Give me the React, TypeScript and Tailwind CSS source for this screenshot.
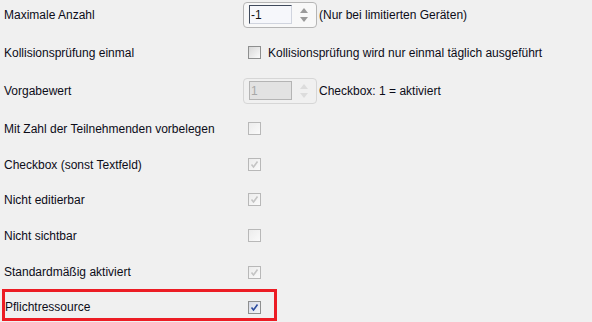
import React from 'react'

type Box = 'off' | 'offDisabled' | 'onDisabled' | 'on'

function CheckBox({ state }: { state: Box }) {
  const disabled = state === 'offDisabled' || state === 'onDisabled'
  const checked = state === 'on' || state === 'onDisabled'
  return (
    <div
      className={`ml-[5px] w-[13px] h-[13px] shrink-0 border flex items-center justify-center ${
        disabled
          ? 'border-[#b8b8b8] bg-gradient-to-br from-[#ececec] to-[#fafafa]'
          : state === 'on'
          ? 'border-[#8e8f8f] bg-gradient-to-br from-[#d6dae6] to-[#f4f5f9]'
          : 'border-[#8e8f8f] bg-gradient-to-br from-[#d8d8d8] to-[#fbfbfb]'
      }`}
    >
      {checked && (
        <svg width="9" height="9" viewBox="0 0 9 9">
          <path
            d="M1.5 4.5 L3.5 7 L7.5 1.5"
            fill="none"
            stroke={disabled ? '#c4c4c4' : '#2a4a9e'}
            strokeWidth="1.6"
          />
        </svg>
      )}
    </div>
  )
}

function Spinner({ value, disabled }: { value: string; disabled?: boolean }) {
  return (
    <div
      className={`w-[74px] h-[26px] rounded-[4px] border flex items-center pl-[5px] pr-[4px] ${
        disabled ? 'border-[#d6d6d6] bg-[#f0f0f0]' : 'border-[#b5b5b5] bg-[#f8f8f8]'
      }`}
    >
      <div
        className={`w-[43px] h-[19px] border flex items-center pl-[1px] leading-none ${
          disabled
            ? 'border-[#b4b4b4] bg-[#e2e2e2] text-[#a8a8a8]'
            : 'border-t-[#3f4a5c] border-l-[#3f4a5c] border-r-[#d0d4de] border-b-[#d0d4de] bg-[#f6f7fb] text-[#111]'
        }`}
      >
        {value}
      </div>
      <div className="ml-auto mr-[1px] w-[14px] h-[20px] flex flex-col items-center justify-between py-[3px]">
        <svg width="8" height="5" viewBox="0 0 8 5">
          <path d="M0 5 L4 0 L8 5 Z" fill={disabled ? '#dcdcdc' : '#9a9a9a'} />
        </svg>
        <svg width="8" height="5" viewBox="0 0 8 5">
          <path d="M0 0 L8 0 L4 5 Z" fill={disabled ? '#dcdcdc' : '#9a9a9a'} />
        </svg>
      </div>
    </div>
  )
}

export default function App() {
  return (
    <div className="relative w-[592px] h-[322px] overflow-hidden bg-[#f0f0f0] text-[12px] text-[#0c0c18] font-['Liberation_Sans',Arial,sans-serif]">
      <div className="flex items-center h-[29px]">
        <div className="w-[243px] pl-[4px]">Maximale Anzahl</div>
        <Spinner value="-1" />
        <span className="ml-[2px]">(Nur bei limitierten Geräten)</span>
      </div>
      <div className="flex items-center h-[47px]">
        <div className="w-[243px] pl-[4px]">Kollisionsprüfung einmal</div>
        <CheckBox state="off" />
        <span className="ml-[7px]">Kollisionsprüfung wird nur einmal täglich ausgeführt</span>
      </div>
      <div className="flex items-center h-[29px]">
        <div className="w-[243px] pl-[4px]">Vorgabewert</div>
        <Spinner value="1" disabled />
        <span className="ml-[2px]">Checkbox: 1 = aktiviert</span>
      </div>
      <div className="flex items-center h-[47px]">
        <div className="w-[243px] pl-[4px]">Mit Zahl der Teilnehmenden vorbelegen</div>
        <CheckBox state="offDisabled" />
      </div>
      <div className="flex items-center h-[25px]">
        <div className="w-[243px] pl-[4px]">Checkbox (sonst Textfeld)</div>
        <CheckBox state="onDisabled" />
      </div>
      <div className="flex items-center h-[45px]">
        <div className="w-[243px] pl-[4px]">Nicht editierbar</div>
        <CheckBox state="onDisabled" />
      </div>
      <div className="flex items-center h-[27px]">
        <div className="w-[243px] pl-[4px]">Nicht sichtbar</div>
        <CheckBox state="offDisabled" />
      </div>
      <div className="flex items-center h-[46px]">
        <div className="w-[243px] pl-[4px]">Standardmäßig aktiviert</div>
        <CheckBox state="onDisabled" />
      </div>
      <div className="flex items-center h-[24px]">
        <div className="w-[243px] pl-[5px]">Pflichtressource</div>
        <CheckBox state="on" />
      </div>

      {/* annotation frame */}
      <div className="absolute left-[2px] top-[289px] w-[275px] h-[32px] border-[3px] border-[#ec1c24]" />
    </div>
  )
}
